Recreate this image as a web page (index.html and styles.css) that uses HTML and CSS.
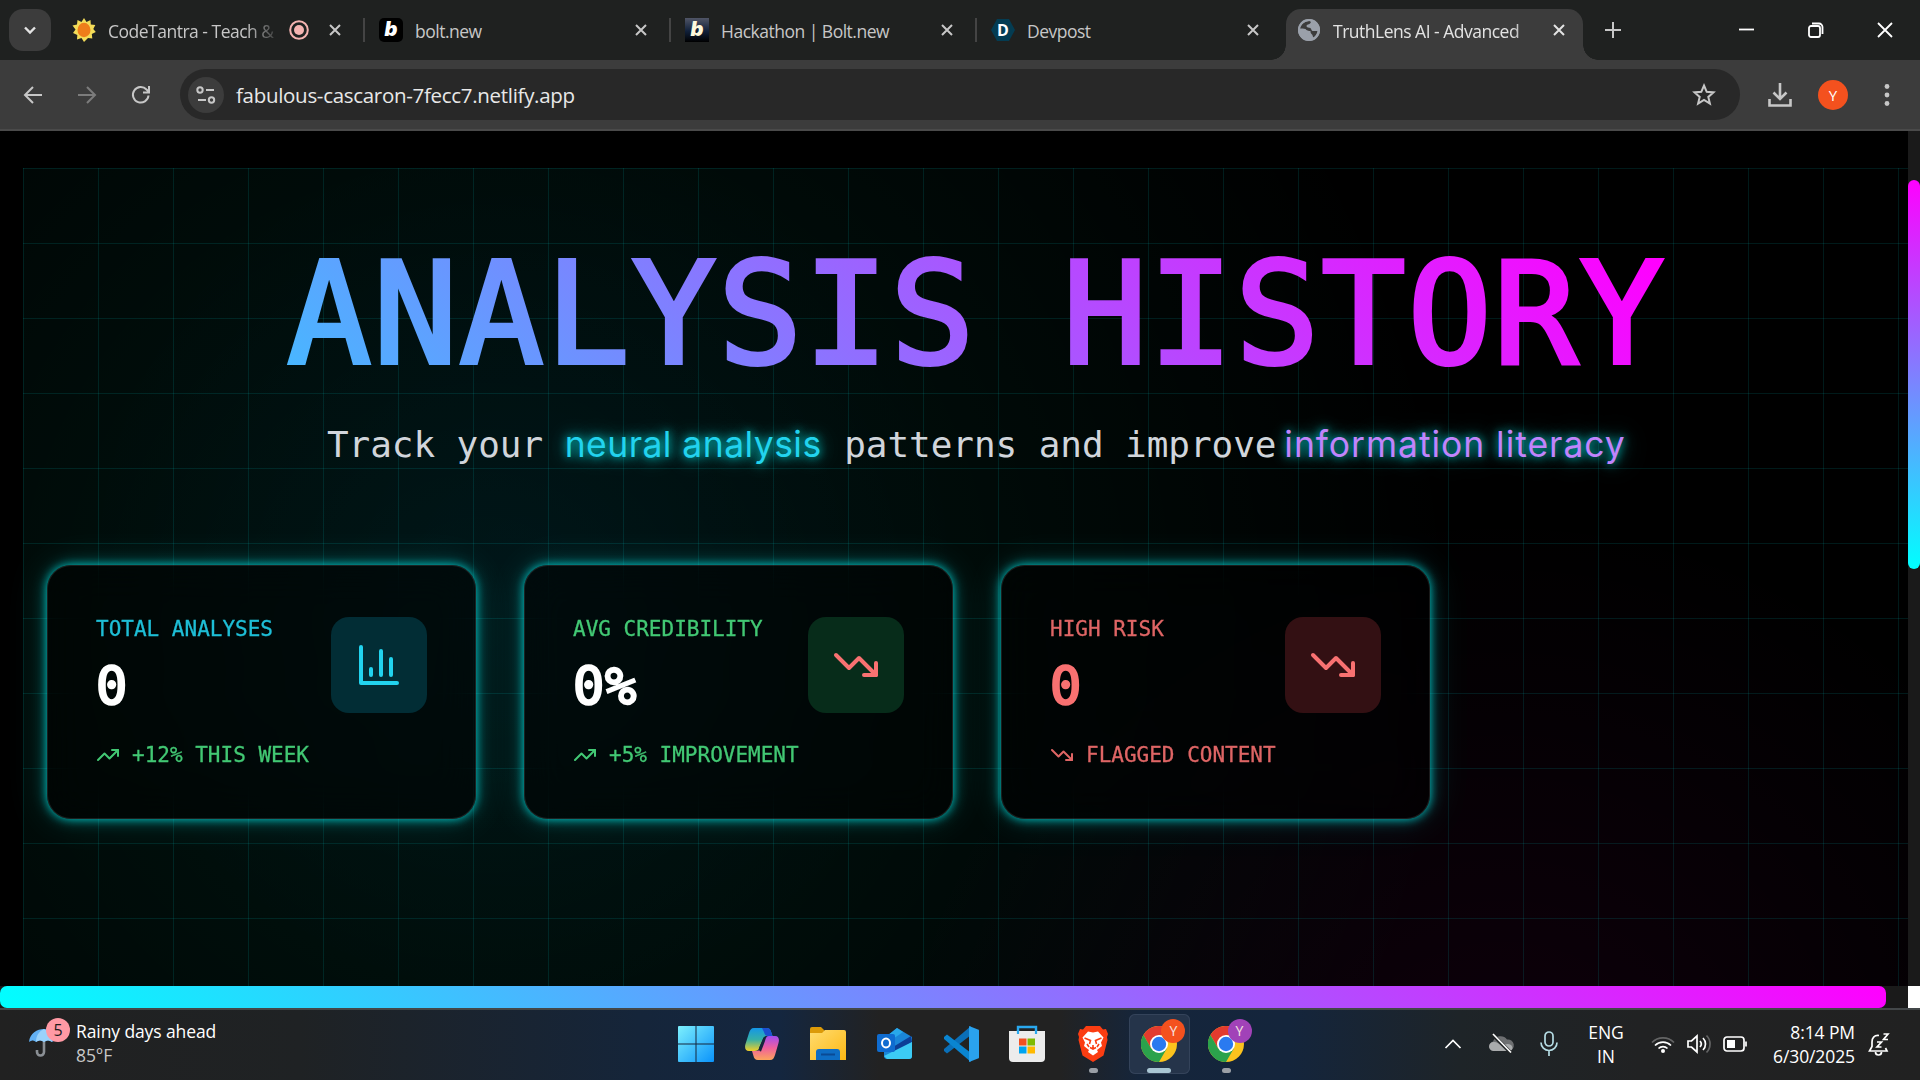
FILE: index.html
```html
<!DOCTYPE html>
<html lang="en">
  <head>
    <meta charset="utf-8">
    <title>TruthLens AI - Advanced</title>
    <link rel="stylesheet" href="styles.css">
  </head>
  <body>
    <svg class="defs" width="0" height="0">
      <symbol id="close" viewBox="0 0 14 14"><path d="M2 2l10 10M12 2L2 12"/></symbol>
      <symbol id="trend-up" viewBox="0 0 24 24"><path d="M22 7l-8.5 8.5-5-5L2 17"/><path d="M16 7h6v6"/></symbol>
      <symbol id="trend-down" viewBox="0 0 24 24"><path d="M22 17l-8.5-8.5-5 5L2 7"/><path d="M16 17h6v-6"/></symbol>
      <symbol id="chrome" viewBox="0 0 36 36">
        <circle cx="18" cy="18" r="18" fill="#fcc31e"/>
        <path d="M2.4 9A18 18 0 0 1 33.6 9H18l-7.8 13.5z" fill="#e33b2e"/>
        <path d="M2.4 9A18 18 0 0 0 18 36l7.800-13.500H10.200z" fill="#2ba24c"/>
        <circle cx="18" cy="18" r="9" fill="#fff"/>
        <circle cx="18" cy="18" r="7.2" fill="#2a7af0"/>
      </symbol>
    </svg>

    <!-- Browser tabs -->
    <header class="tabs">
      <div class="tab-search">
        <svg width="14" height="14" viewBox="0 0 14 14"><path d="M2 4.5l5 5 5-5"/></svg>
      </div>
      <div class="tab first">
        <svg class="favicon" viewBox="0 0 24 24">
          <path d="M12 0l2.500 4 4-2 .3 4.500 4.500.5-2 4 2.500 3-4 2 .5 4.500-4.300-.5L12 24l-2.500-4-4.500 1.500.3-4.500L1 15l2.500-3.500L.5 7.500 5 6.500l.5-4.500 4 2z" fill="#f3dc58"/>
          <ellipse cx="12" cy="12" rx="6.500" ry="7.200" fill="#ee7d1a"/>
        </svg>
        <span class="tab-title fade">CodeTantra - Teach &amp;</span>
        <svg class="rec" viewBox="0 0 20 20"><circle cx="10" cy="10" r="8.800" fill="none" stroke="#f5b4b1" stroke-width="2"/><circle cx="10" cy="10" r="5" fill="#f5b4b1"/></svg>
        <svg class="close"><use href="#close"/></svg>
      </div>
      <div class="tab line">
        <span class="favicon bolt">b</span>
        <span class="tab-title">bolt.new</span>
        <svg class="close"><use href="#close"/></svg>
      </div>
      <div class="tab line">
        <span class="favicon bolt hack">b</span>
        <span class="tab-title">Hackathon | Bolt.new</span>
        <svg class="close"><use href="#close"/></svg>
      </div>
      <div class="tab line">
        <span class="favicon devpost">D</span>
        <span class="tab-title">Devpost</span>
        <svg class="close"><use href="#close"/></svg>
      </div>
      <div class="tab active">
        <svg class="favicon globe" viewBox="0 0 24 24">
          <circle cx="12" cy="12" r="11" fill="#9aa0aa"/>
          <path d="M13 3c2 1 0 3-2 3.500-2 .5-2 2.500 0 3 2 .3 3 .5 3.500 2.500.5 1.500 3 1 6 1-.5 3-2 5-4 6.500-1-1-.5-2.500-2-3.500-1-1-1-2-1-3-2 0-4-.5-5-2-2-1-3.500-.5-5.500-.5C3.500 7 7 3 13 3z" fill="#3c3c3c"/>
          <circle cx="12" cy="12" r="10" fill="none" stroke="#9aa0aa" stroke-width="2"/>
        </svg>
        <span class="tab-title fade">TruthLens AI - Advanced</span>
        <svg class="close"><use href="#close"/></svg>
      </div>
      <svg class="new-tab" viewBox="0 0 16 16"><path d="M8 0v16M0 8h16"/></svg>
      <div class="window-buttons">
        <svg width="16" height="16"><path d="M0 7.500h15"/></svg>
        <svg width="16" height="16"><rect x="1" y="4" width="11" height="11" rx="2"/><path d="M4 1.500h7a3.500 3.500 0 0 1 3.500 3.500v7"/></svg>
        <svg width="16" height="16"><path d="M1 1l14 14M15 1L1 15"/></svg>
      </div>
    </header>

    <!-- Address bar -->
    <nav class="toolbar">
      <svg class="nav" viewBox="0 0 20 20"><path d="M19 10H2M10 2l-8 8 8 8"/></svg>
      <svg class="nav disabled" viewBox="0 0 20 20"><path d="M1 10h17M10 2l8 8-8 8"/></svg>
      <svg class="nav" viewBox="0 0 20 20"><path d="M17.500 10.500A7.800 7.800 0 1 1 15.500 4.500l2.500 2.500M18 1v6.500h-6"/></svg>
      <div class="url-bar">
        <span class="site-info">
          <svg width="20" height="18" viewBox="0 0 20 18"><circle cx="4" cy="4" r="2.700"/><path d="M10 4h8M2 14h8"/><circle cx="15.500" cy="14" r="2.700"/></svg>
        </span>
        <span class="url">fabulous-cascaron-7fecc7.netlify.app</span>
        <svg class="star" viewBox="0 0 24 24"><path d="M12 2.500l2.700 6.300 6.800.6-5.200 4.500 1.600 6.700-5.900-3.600-5.900 3.600 1.600-6.700L2.500 9.400l6.800-.6z"/></svg>
      </div>
      <svg class="download" viewBox="0 0 24 24"><path d="M12 0v15M5.500 9.500L12 16l6.500-6.500M1.500 16v6.500h21V16"/></svg>
      <span class="avatar">Y</span>
      <svg class="dots" viewBox="0 0 6 24"><circle cx="3" cy="3.500" r="2.400"/><circle cx="3" cy="12" r="2.400"/><circle cx="3" cy="20.500" r="2.400"/></svg>
    </nav>

    <!-- Page -->
    <div class="viewport">
      <main class="page">
        <div class="cyber-grid">
          <h1>ANALYSIS HISTORY</h1>
          <p class="subtitle">Track your <span class="neon cyan">neural analysis</span> patterns and improve<span class="neon purple">information literacy</span></p>

          <section class="stats">
            <div class="card">
              <div class="card-top">
                <div>
                  <div class="label cyan">TOTAL ANALYSES</div>
                  <div class="value">0</div>
                </div>
                <div class="icon-box blue">
                  <svg class="cyan" viewBox="0 0 24 24"><path d="M3 3v18h18M18 17V9M13 17V5M8 17v-3"/></svg>
                </div>
              </div>
              <div class="trend green"><svg><use href="#trend-up"/></svg>+12% THIS WEEK</div>
            </div>
            <div class="card">
              <div class="card-top">
                <div>
                  <div class="label green">AVG CREDIBILITY</div>
                  <div class="value">0%</div>
                </div>
                <div class="icon-box emerald">
                  <svg class="red"><use href="#trend-down"/></svg>
                </div>
              </div>
              <div class="trend green"><svg><use href="#trend-up"/></svg>+5% IMPROVEMENT</div>
            </div>
            <div class="card">
              <div class="card-top">
                <div>
                  <div class="label red">HIGH RISK</div>
                  <div class="value red">0</div>
                </div>
                <div class="icon-box crimson">
                  <svg class="red"><use href="#trend-down"/></svg>
                </div>
              </div>
              <div class="trend red"><svg><use href="#trend-down"/></svg>FLAGGED CONTENT</div>
            </div>
          </section>
        </div>
      </main>
      <div class="scroll-y"><div class="thumb-y"></div></div>
      <div class="scroll-x"><div class="thumb-x"></div></div>
      <div class="scroll-corner"></div>
    </div>

    <!-- Taskbar -->
    <footer class="taskbar">
      <div class="weather">
        <div class="umbrella">
          <svg width="34" height="40" viewBox="0 0 34 40">
            <path d="M15 16v17a3.500 3.500 0 0 1-7 0v-2" fill="none" stroke="#8a8f94" stroke-width="2.600"/>
            <path d="M0 23C1 14 8 10 15 10s14 4 15 13c-3-2-5-2-7 0-3-2-5-2-8 0-3-2-5-2-8 0-2-2-4-2-7 0z" fill="#62b1f5"/>
            <path d="M7 23c0-6 3-11 8-13 5 2 8 7 8 13-3-2-5-2-8 0-3-2-5-2-8 0z" fill="#9ad2fb"/>
          </svg>
          <span class="badge pink">5</span>
        </div>
        <div class="weather-text">Rainy days ahead<small>85°F</small></div>
      </div>

      <div class="apps">
        <div class="app">
          <svg width="36" height="36" viewBox="0 0 36 36">
            <defs><linearGradient id="win" gradientUnits="userSpaceOnUse" x1="0" y1="0" x2="36" y2="36"><stop offset="0" stop-color="#7df0fd"/><stop offset="1" stop-color="#0a93fb"/></linearGradient></defs>
            <path d="M1 0h16.500v17.500H0V1a1 1 0 0 1 1-1zM18.500 0H35a1 1 0 0 1 1 1v16.500H18.500zM0 18.500h17.500V36H1a1 1 0 0 1-1-1zM18.500 18.500H36V35a1 1 0 0 1-1 1H18.500z" fill="url(#win)"/>
          </svg>
        </div>
        <div class="app">
          <svg width="34" height="32" viewBox="0 0 34 32">
            <defs>
              <linearGradient id="cp1" x1="0" y1="0" x2="0" y2="1"><stop offset="0" stop-color="#1496e8"/><stop offset=".5" stop-color="#36b0a8"/><stop offset="1" stop-color="#f2cf27"/></linearGradient>
              <linearGradient id="cp2" x1="0" y1="0" x2="0" y2="1"><stop offset="0" stop-color="#a24cf0"/><stop offset=".5" stop-color="#f0609c"/><stop offset="1" stop-color="#fca45c"/></linearGradient>
            </defs>
            <path d="M9 0h13c3 0 4 3 4.500 5l1 3h-5c-3 0-4 1-5 4l-3 7c-1 3-2 4-5 4H4c-4 0-4.500-4-3.500-7L4 5c1-3 2-5 5-5z" fill="url(#cp1)"/>
            <path d="M17 0h5c3 0 4 3 4.500 5l1 3h-5c-2 0-3-2-3.500-4z" fill="#1c4fd0"/>
            <path d="M25 32H13c-3 0-4-2-4.500-4L7 23h4c3 0 4-1 5-4l3-7c1-3 2-4 5-4h6c4 0 4.500 4 3.500 7L30 27c-1 3-2 5-5 5z" fill="url(#cp2)"/>
            <path d="M17.500 12L14 20c-.3 2 .5 3.500 2 3.500l4-10.500c.5-2 1-4 2.500-5-3 0-4 1-5 4z" fill="#16253c"/>
          </svg>
        </div>
        <div class="app">
          <svg width="36" height="34" viewBox="0 0 36 34">
            <defs><linearGradient id="fold" x1="0" y1="0" x2="1" y2="1"><stop offset="0" stop-color="#ffdc70"/><stop offset="1" stop-color="#fdb813"/></linearGradient></defs>
            <path d="M0 2a2 2 0 0 1 2-2h9l4 4v6H0z" fill="#dc9a08"/>
            <path d="M0 6h12l3-3h19a2 2 0 0 1 2 2v28H0z" fill="url(#fold)"/>
            <path d="M6 33V25a3 3 0 0 1 3-3h18a3 3 0 0 1 3 3v8z" fill="#0e6dc4"/>
            <path d="M11 27.500h14" stroke="#0a4a94" stroke-width="2"/>
          </svg>
        </div>
        <div class="app">
          <svg width="36" height="32" viewBox="0 0 36 32">
            <path d="M7 10L20 0l15 9v19a3 3 0 0 1-3 3H10a3 3 0 0 1-3-3z" fill="#1a86d8"/>
            <path d="M9 9L20 0l6 4-13 9z" fill="#28a8ea"/>
            <path d="M16 19L34 8l1 6-19 12z" fill="#0c3f96"/>
            <path d="M7 28l28-14v14a3 3 0 0 1-3 3H10z" fill="#3ccbf4"/>
            <rect x="0" y="6" width="18" height="18" rx="2" fill="#0f6cd0"/>
            <ellipse cx="9" cy="15" rx="4" ry="4.500" fill="none" stroke="#fff" stroke-width="2"/>
          </svg>
        </div>
        <div class="app">
          <svg width="36" height="36" viewBox="0 0 36 36">
            <path d="M1 25l3 2.500L28 9V0L1 23z" fill="#0a6fb8"/>
            <path d="M1 11l3-2.500L28 27v9L1 13z" fill="#0a85d1"/>
            <path d="M26 0l9 3.500a1 1 0 0 1 1 1v27a1 1 0 0 1-1 1L26 36z" fill="#2aa2ee"/>
          </svg>
        </div>
        <div class="app">
          <svg width="36" height="36" viewBox="0 0 36 36">
            <path d="M9 7V1h18v6" fill="none" stroke="#29a8ee" stroke-width="2.400"/>
            <path d="M0 5h36v27a4 4 0 0 1-4 4H4a4 4 0 0 1-4-4z" fill="#ececec"/>
            <path d="M9 8V4M27 8V4" stroke="#29a8ee" stroke-width="2.200"/>
            <path d="M10 12.500h7.500v7H10z" fill="#f25022"/><path d="M18.500 12.500H26v7h-7.500z" fill="#7fba00"/>
            <path d="M10 20.500h7.500v7H10z" fill="#00a4ef"/><path d="M18.500 20.500H26v7h-7.500z" fill="#ffb900"/>
          </svg>
        </div>
        <div class="app open">
          <svg width="30" height="36" viewBox="0 0 30 36">
            <path d="M8 0h14l3 3.500 3-.5 2 5-1 3 .5 3-4 15.500L15 36 4.500 29.500.5 14 1 11 0 8l2-5 3 .5z" fill="#fb3d12"/>
            <path d="M10 5.500l5 1 5-1 5.500 6-2.500 5 1 3.500-5 4 1 2-5 3.500-5-3.500 1-2-5-4 1-3.500-2.500-5z" fill="#fff"/>
            <path d="M6.500 12l6 2.500-1 3.500M23.500 12l-6 2.500 1 3.500M12 21.500l3 1.500 3-1.500M15 23v-4M9 18l2 3M21 18l-2 3" stroke="#fb3d12" stroke-width="1.600" fill="none"/>
          </svg>
        </div>
        <div class="app open focused">
          <svg width="36" height="36"><use href="#chrome"/></svg>
          <span class="badge orange">Y</span>
        </div>
        <div class="app open">
          <svg width="36" height="36"><use href="#chrome"/></svg>
          <span class="badge violet">Y</span>
        </div>
      </div>

      <div class="tray">
        <svg class="chevron" width="18" height="10" viewBox="0 0 18 10"><path d="M1.500 9L9 1.500 16.500 9"/></svg>
        <svg class="cloud" width="26" height="22" viewBox="0 0 26 22">
          <path d="M6 18a5 5 0 0 1-1-9.500A8 8 0 0 1 19 6.500a5.800 5.800 0 0 1 2 11.500z" fill="#6d6f71"/>
          <path d="M5 18a4.500 4.500 0 0 1 1-9c3 0 5 2 8 4 3-2 6-3 9-1 3 3 1 6-2 6z" fill="#a9abac"/>
          <path d="M4 1l19 19" class="cut"/><path d="M5 1l18 18.500"/>
        </svg>
        <svg class="mic" width="18" height="26" viewBox="0 0 18 26"><rect x="5" y="1" width="8" height="14" rx="4"/><path d="M1 11.500a8 8 0 0 0 16 0M9 19.500V25"/></svg>
        <div class="lang">ENG<br>IN</div>
        <svg class="wifi" width="24" height="19" viewBox="0 0 24 19"><path d="M1 7.500a15.500 15.500 0 0 1 22 0" opacity=".3"/><path d="M4 10.500a11.300 11.300 0 0 1 16 0M7.500 13.500a6.500 6.500 0 0 1 9 0"/><circle cx="12" cy="16" r="2" class="solid"/></svg>
        <svg class="volume" width="24" height="20" viewBox="0 0 24 20"><path d="M1 7h3.500L10 2v16l-5.500-5H1zM13 7a4.500 4.500 0 0 1 0 6M16 4a8.500 8.500 0 0 1 0 12"/><path d="M19.500 1.500a12 12 0 0 1 0 17" opacity=".3"/></svg>
        <svg class="battery" width="25" height="16" viewBox="0 0 25 16"><rect x="1" y="1" width="20" height="14" rx="3"/><rect x="4" y="4" width="8" height="8" class="solid"/><path d="M23 5.500v5"/></svg>
        <div class="clock">8:14 PM<br>6/30/2025</div>
        <svg class="bell" width="22" height="24" viewBox="0 0 22 24"><path d="M11 3.500C6 3 4 6 4 10v4.500L1.500 19h17.500l-1.500-3M7.500 20a3 3 0 0 0 6 0M9 10h4.500L9 15h4.500M15.500 2H20l-4.500 5.500H20"/></svg>
      </div>
    </footer>
  </body>
</html>
```
FILE: styles.css
```css
* {
  box-sizing: border-box;
}

body {
  margin: 0;
  width: 1920px;
  height: 1080px;
  overflow: hidden;
  display: flex;
  flex-direction: column;
  background: #000;
  font-family: "Open Sans", "Noto Sans", sans-serif;
  font-size: 18px;
  color: #fff;
}

svg {
  flex: none;
  overflow: visible;
}

.defs {
  position: absolute;
}

/* Tab strip */
.tabs {
  height: 60px;
  flex: none;
  display: flex;
  align-items: center;
  padding-left: 9px;
  background: #1f2120;
}

.tab-search {
  width: 42px;
  height: 42px;
  margin-right: 6px;
  border-radius: 14px;
  background: #3c3c3c;
  display: flex;
  align-items: center;
  justify-content: center;
}

.tabs svg,
.toolbar svg {
  fill: none;
  stroke: #c7c7c7;
  stroke-width: 2;
}

.tabs .tab-search svg {
  stroke: #e3e3e3;
  stroke-width: 2.4;
}

.tab {
  width: 306px;
  height: 51px;
  margin-top: 9px;
  padding: 0 21px 9px 16px;
  display: flex;
  align-items: center;
  color: #c7c7c7;
}

.first {
  padding-left: 15px;
}

.line {
  background: linear-gradient(#444, #444) 0 9px / 2px 24px no-repeat;
}

.tabs .favicon {
  width: 24px;
  height: 24px;
  margin-right: 12px;
  flex: none;
  stroke: none;
}

.tab-title {
  flex: 1;
  white-space: nowrap;
  font-size: 17.5px;
  letter-spacing: -0.5px;
  padding-top: 2px;
}

.fade {
  -webkit-mask-image: linear-gradient(to right, #000 calc(100% - 36px), transparent);
  mask-image: linear-gradient(to right, #000 calc(100% - 36px), transparent);
}

.tabs .rec {
  width: 20px;
  height: 20px;
  margin: 0 14px 0 7px;
  stroke: none;
}

.close {
  width: 14px;
  height: 14px;
  margin-left: 5px;
}

.bolt {
  border-radius: 5px;
  background: #000;
  color: #fff;
  font: italic 900 20px/23px Inter, sans-serif;
  text-align: center;
}

.hack {
  border-radius: 0;
  background: linear-gradient(#505566, #10203a 55%, #000);
  color: #fdf8dc;
}

.devpost {
  background: #043c52;
  clip-path: polygon(25% 4%, 75% 4%, 100% 50%, 75% 96%, 25% 96%, 0 50%);
  color: #fff;
  font: bold 16px/24px "Open Sans", sans-serif;
  text-align: center;
}

.active {
  position: relative;
  width: 297px;
  margin-left: 5px;
  margin-right: 5px;
  padding-left: 11px;
  padding-right: 17px;
  border-radius: 15px 15px 0 0;
  background: #3c3c3c;
  color: #e3e3e3;
}

.active::before,
.active::after {
  content: "";
  position: absolute;
  bottom: 0;
  width: 15px;
  height: 15px;
}

.active::before {
  left: -15px;
  background: radial-gradient(circle at 0 0, transparent 14.5px, #3c3c3c 15px);
}

.active::after {
  right: -15px;
  background: radial-gradient(circle at 100% 0, transparent 14.5px, #3c3c3c 15px);
}

.tabs .active .close {
  stroke: #e3e3e3;
}

.new-tab {
  width: 16px;
  height: 16px;
  margin-left: 17px;
}

.window-buttons {
  margin-left: auto;
  margin-right: 27px;
  display: flex;
  gap: 53px;
}

.tabs .window-buttons svg {
  stroke: #fff;
  stroke-width: 1.8;
}

/* Toolbar */
.toolbar {
  height: 71px;
  flex: none;
  display: flex;
  align-items: center;
  padding-left: 23px;
  border-bottom: 2px solid #4a4a4a;
  background: #3c3c3c;
}

.nav {
  width: 20px;
  height: 20px;
  margin-right: 34px;
}

.toolbar .disabled {
  stroke: #7c7c7c;
}

.url-bar {
  width: 1560px;
  height: 51px;
  margin-left: -5px;
  padding: 0 24px 0 8px;
  border-radius: 26px;
  background: #282828;
  display: flex;
  align-items: center;
}

.site-info {
  width: 36px;
  height: 36px;
  border-radius: 50%;
  background: #3c3c3c;
  display: flex;
  align-items: center;
  justify-content: center;
}

.url {
  flex: 1;
  margin-left: 12px;
  font-size: 20.5px;
  letter-spacing: -0.3px;
  color: #e8e8e8;
}

.star {
  width: 24px;
  height: 24px;
}

.download {
  width: 24px;
  height: 24px;
  margin-left: 28px;
}

.toolbar .download {
  stroke-width: 2.6;
}

.avatar {
  width: 30px;
  height: 30px;
  margin-left: 26px;
  border-radius: 50%;
  background: #f4511e;
  font-size: 15px;
  line-height: 30px;
  text-align: center;
}

.dots {
  width: 6px;
  height: 24px;
  margin-left: 36px;
}

.toolbar .dots {
  fill: #c7c7c7;
  stroke: none;
}

/* Page */
.viewport {
  height: 877px;
  flex: none;
  display: grid;
  grid-template-columns: 1908px 12px;
  grid-template-rows: 855px 22px;
}

.page {
  padding: 37px 0 0 23px;
  overflow: hidden;
  background: #000;
}

.cyber-grid {
  height: 818px;
  padding: 75px 0 0 24px;
  background:
    linear-gradient(rgba(0, 255, 255, 0.1) 1.5px, transparent 1.5px) 0 0 / 75px 75px,
    linear-gradient(90deg, rgba(0, 255, 255, 0.1) 1.5px, transparent 1.5px) 0 0 / 75px 75px,
    radial-gradient(circle 450px at 500px 400px, rgba(0, 60, 255, 0.035), transparent),
    radial-gradient(circle 980px at 460px 460px, rgba(0, 255, 200, 0.085), transparent),
    radial-gradient(circle 620px at 1480px 960px, rgba(255, 0, 200, 0.06), transparent);
}

h1 {
  width: 1382px;
  height: 144px;
  margin: 0 0 0 239px;
  font: 140px/144px "DejaVu Sans Mono", monospace;
  letter-spacing: 1.9px;
  text-indent: 1px;
  white-space: nowrap;
  -webkit-text-stroke: 4px transparent;
  background: linear-gradient(45deg, #00ffff -37%, #ff00ff 98%);
  -webkit-background-clip: text;
  background-clip: text;
  color: transparent;
}

.subtitle {
  height: 54px;
  margin: 31px 0 0 280px;
  font: 36px/54px "DejaVu Sans Mono", monospace;
  letter-spacing: -0.07px;
  white-space: nowrap;
  color: #d1d5db;
}

.neon {
  display: inline-block;
  font-family: Inter, sans-serif;
  font-size: 35.5px;
  text-shadow: 0 0 8px rgba(0, 255, 255, 0.7), 0 0 16px rgba(0, 255, 255, 0.5), 0 0 30px rgba(0, 255, 255, 0.3);
}

.neon.cyan {
  width: 258px;
  letter-spacing: 0.45px;
}

.neon.purple {
  margin-left: 8px;
  letter-spacing: 0.95px;
}

.cyan {
  color: #22d3ee;
}

.purple {
  color: #c084fc;
}

.green {
  color: #4ade80;
}

.red {
  color: #f87171;
}

/* Stat cards */
.stats {
  display: grid;
  grid-template-columns: repeat(4, 429px);
  gap: 48px;
  margin-top: 93px;
}

.card {
  height: 254px;
  padding: 48px;
  border: 1.5px solid rgba(255, 255, 255, 0.1);
  border-radius: 24px;
  background: rgba(0, 0, 0, 0.5);
  backdrop-filter: blur(20px);
  box-shadow: 0 0 8px rgba(0, 255, 255, 0.6), 0 0 16px rgba(0, 255, 255, 0.35), 0 0 40px rgba(0, 255, 255, 0.14);
  font-family: "DejaVu Sans Mono", monospace;
  font-size: 21px;
  line-height: 30px;
}

.card svg {
  fill: none;
  stroke: currentColor;
  stroke-width: 2;
  stroke-linecap: round;
  stroke-linejoin: round;
}

.card-top {
  display: flex;
  align-items: center;
  justify-content: space-between;
}

.label,
.trend {
  opacity: 0.9;
  -webkit-text-stroke: 0.3px currentColor;
}

.value {
  margin-top: 12px;
  font-size: 52px;
  letter-spacing: 0.8px;
  line-height: 60px;
  -webkit-text-stroke: 2.4px currentColor;
}

.icon-box {
  width: 96px;
  height: 96px;
  border-radius: 18px;
  display: flex;
  align-items: center;
  justify-content: center;
}

.icon-box svg {
  width: 48px;
  height: 48px;
}

.blue {
  background: #022d35;
}

.emerald {
  background: #072c1a;
}

.crimson {
  background: #331013;
}

.trend {
  display: flex;
  align-items: center;
  gap: 12px;
  margin-top: 24px;
}

.trend svg {
  width: 24px;
  height: 24px;
}

/* Scrollbars */
.scroll-y,
.scroll-x {
  background: #1a1a1a;
}

.scroll-y {
  padding-top: 49px;
}

.thumb-y {
  height: 389px;
  border-radius: 6px;
  background: linear-gradient(#ff00ff, #00ffff);
}

.thumb-x {
  width: 1886px;
  height: 22px;
  border-radius: 7px;
  background: linear-gradient(45deg, #00ffff, #ff00ff);
}

.scroll-corner {
  background: #fff;
}

/* Taskbar */
.taskbar {
  height: 72px;
  flex: none;
  display: grid;
  grid-template-columns: 662px 594px 1fr;
  border-top: 2px solid #434749;
  background: linear-gradient(90deg, #212121 0, #1f2224 300px, #15253a 640px, #14263f 780px, #222 880px, #222 1060px, #15253b 1140px, #14253c 1290px, #1e2428 1460px, #212223 1640px, #212121);
}

.weather {
  display: flex;
  padding: 9px 0 0 29px;
}

.umbrella {
  position: relative;
  width: 47px;
}

.weather-text {
  line-height: 24px;
  font-size: 17.5px;
  letter-spacing: -0.1px;
}

.weather-text small {
  display: block;
  font-size: 17.5px;
  color: #c8c8c8;
}

.badge {
  position: absolute;
  width: 24px;
  height: 24px;
  border-radius: 50%;
  font-size: 14px;
  line-height: 24px;
  text-align: center;
}

.pink {
  left: 17px;
  top: -1px;
  background: #ff99a4;
  color: #1b1b1b;
  font-size: 16px;
}

.apps {
  display: grid;
  grid-template-columns: repeat(9, 66.2px);
  padding-left: 1px;
}

.app {
  position: relative;
  height: 60px;
  margin: 4px 3px;
  border-radius: 6px;
  display: flex;
  align-items: center;
  justify-content: center;
}

.open::after {
  content: "";
  position: absolute;
  bottom: 1px;
  left: 26px;
  width: 9px;
  height: 5px;
  border-radius: 3px;
  background: #9a9fa6;
}

.focused {
  background: #25344a;
  box-shadow: inset 0 0 0 1px #34435a;
}

.focused::after {
  left: 18px;
  width: 24px;
  background: #a9c6d4;
}

.app .badge {
  left: 32px;
  top: 5px;
  color: #f5e4e0;
}

.orange {
  background: #f4511e;
}

.violet {
  background: #a142b8;
}

.tray {
  display: flex;
  align-items: center;
  padding: 0 30px 2px 188px;
  font-size: 17.5px;
  line-height: 24px;
}

.tray svg {
  fill: none;
  stroke: #fff;
  stroke-width: 1.7;
}

.cloud {
  margin-left: 26px;
}

.tray .cloud path:nth-child(-n+2) {
  stroke: none;
}

.cut {
  stroke: #222526;
  stroke-width: 3.5;
}

.tray .solid {
  fill: #fff;
  stroke: none;
}

.mic {
  margin-left: 26px;
}

.tray .mic {
  stroke: #b5dce4;
}

.lang {
  width: 50px;
  margin-left: 23px;
  text-align: center;
}

.wifi {
  margin-left: 20px;
}

.volume,
.battery {
  margin-left: 12px;
}

.clock {
  width: 90px;
  margin-left: 17px;
  text-align: right;
  white-space: nowrap;
  letter-spacing: -0.1px;
}

.bell {
  margin-left: auto;
}
```
